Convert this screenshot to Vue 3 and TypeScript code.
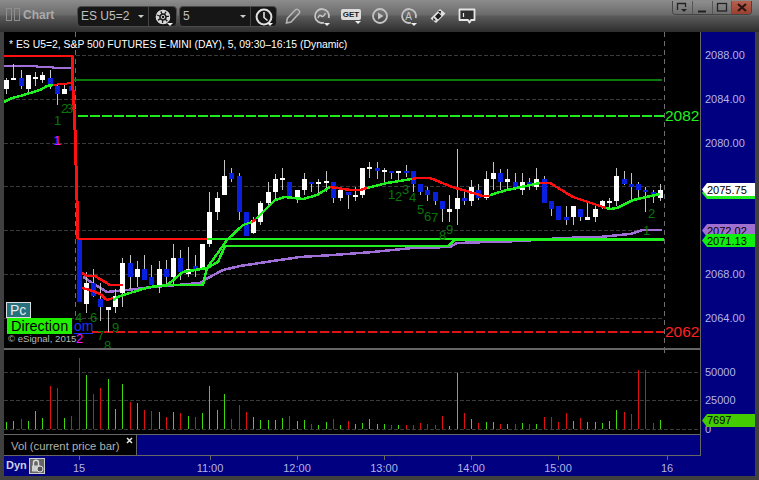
<script setup lang="ts">
type Candle = [number, number, number, number, 'w' | 'b']
const raw: Candle[] = [
  [78,94,80,89,'w'],[64,80,78,80,'w'],[70,89,78,86,'b'],[75,93,75,89,'w'],[72,86,77,79,'w'],[72,83,75,80,'w'],[70,89,78,86,'b'],[83,105,86,94,'b'],[83,94,89,94,'w'],[72,91,86,91,'b'],
  [239,302,239,302,'b'],[272,313,283,304,'w'],[269,297,283,296,'b'],[283,321,299,307,'b'],[307,332,307,310,'w'],[289,313,296,307,'w'],[258,307,263,293,'w'],[255,289,263,277,'b'],[261,287,269,277,'w'],[255,280,269,280,'b'],
  [265,285,277,285,'b'],[261,293,269,285,'w'],[260,287,269,277,'b'],[244,284,258,277,'w'],[250,280,258,272,'b'],[247,277,269,274,'w'],[255,277,266,269,'b'],[244,270,244,269,'w'],[192,247,212,244,'w'],[192,220,198,212,'w'],
  [160,195,176,195,'w'],[168,182,173,179,'b'],[173,220,176,212,'b'],[212,236,212,236,'b'],[217,234,220,233,'w'],[201,225,203,222,'w'],[182,206,192,203,'w'],[174,200,179,192,'w'],[168,190,178,180,'w'],[182,198,182,198,'b'],
  [190,203,190,198,'w'],[173,195,179,190,'w'],[182,192,182,184,'b'],[179,193,182,184,'w'],[171,192,181,183,'w'],[182,203,182,198,'b'],[187,201,190,198,'w'],[192,209,192,195,'b'],[187,201,195,197,'w'],[168,198,168,195,'w'],
  [162,178,167,169,'w'],[162,179,168,171,'b'],[168,182,170,172,'w'],[171,179,171,173,'b'],[171,182,171,173,'w'],[165,177,171,173,'b'],[171,192,171,184,'b'],[184,195,184,192,'b'],[187,201,190,195,'b'],[192,205,192,201,'b'],
  [201,222,201,209,'b'],[195,222,209,212,'w'],[149,225,198,209,'w'],[190,205,198,201,'b'],[180,206,187,201,'w'],[184,200,190,198,'b'],[171,200,179,198,'w'],[162,190,173,179,'w'],[169,190,173,182,'b'],[169,190,179,182,'w'],
  [173,190,182,187,'b'],[173,195,182,190,'w'],[178,190,182,184,'b'],[168,190,179,187,'w'],[176,203,179,203,'b'],[201,216,201,209,'b'],[206,220,206,220,'b'],[206,225,217,220,'b'],[206,225,206,217,'w'],[209,221,209,217,'b'],
  [202,220,217,220,'w'],[204,222,209,217,'w'],[200,209,201,206,'w'],[198,209,201,203,'w'],[168,206,176,201,'w'],[171,185,179,184,'b'],[173,200,184,187,'b'],[182,200,184,190,'b'],[187,212,190,192,'b'],[190,203,192,195,'b'],
  [184,201,190,198,'w'],
]
const xAt = (i: number) => Math.floor(6.5 + 7.267 * i)
const candles = raw.map((c, i) => ({ x: xAt(i), wt: c[0], wb: c[1], bt: c[2], bh: Math.max(c[3] - c[2], 2), fill: c[4] === 'w' ? '#ffffff' : '#0a20e0' }))

const volTops = '246g 243g 237r 243g 213g 234g 138r 144r 234g 228r 54r 105g 162r 144r 117g 207g 132g 186r 189g 210r 213r 216g 231r 216g 219r 228g 231r 219g 138g 210g 162g 237r 195r 216r 231g 240g 240g 240g 234g 228r 243g 240g 252r 255g 246g 237r 255g 243r 252g 249g 237g 252g 252g 255r 255g 255r 255r 249r 252r 255r 228r 258g 99g 219r 237g 249r 246g 246g 252r 252g 252r 249g 252r 252g 231r 231r 246r 219r 243g 234r 246g 246g 249g 243g 210g 216r 222r 90r 90r 249r 240g'.split(' ')
const vols = volTops.map((s, i) => ({
  x: xAt(i) + 0.5,
  y: 340 + parseInt(s) / 3,
  c: s.endsWith('g') ? '#3fd80a' : '#e01010',
}))

const gridPrice = [55, 99, 143, 186, 230, 274, 318]
const gridVol = [372, 400, 429]

const pts = (a: number[][]) => a.map(p => p.join(',')).join(' ')
const greenA = pts([[4,102],[12,98],[20,96],[30,93],[40,90],[47,86],[53,85]])
const redA = pts([[53,85],[62,84],[72,83]])
const purpleA = pts([[4,66],[37,66],[37,67],[53,67],[53,68],[72,68]])
const redTop = pts([[4,56],[73,56]])
const redDrop = pts([[72,56],[73,90],[75,130],[77,200],[78,239]])
const redBase = pts([[78,239],[207,239]])
const red1 = pts([[82,273],[87,276],[95,276],[110,285],[123,285]])
const red2 = pts([[82,288],[90,290],[100,294],[107,300],[113,298]])
const green1 = pts([[113,300],[118,297],[133,292],[150,287],[170,285],[203,285],[207,268],[218,262],[225,246]])
const greenMain = [
  { c: '#20f020', p: pts([[167,285],[183,272],[207,268],[227,240],[243,225],[252,222]]) },
  { c: '#ff1010', p: pts([[252,222],[256,219]]) },
  { c: '#20f020', p: pts([[256,219],[263,212],[275,200],[285,197],[303,199],[317,195],[330,187]]) },
  { c: '#ff1010', p: pts([[330,187],[337,188],[350,190],[360,190],[367,188]]) },
  { c: '#20f020', p: pts([[367,188],[387,183],[412,179]]) },
  { c: '#ff1010', p: pts([[412,179],[417,178],[430,178],[440,182],[452,187],[463,190],[483,196],[490,196]]) },
  { c: '#20f020', p: pts([[490,195],[507,190],[540,183]]) },
  { c: '#ff1010', p: pts([[540,183],[550,183],[573,197],[600,206],[606,208]]) },
  { c: '#20f020', p: pts([[606,208],[610,209],[617,208],[633,200],[660,194]]) },
]
const purpleB = pts([[83,277],[92,283],[107,292],[127,290],[153,287],[177,285],[200,283],[208,278],[223,270],[240,266],[273,261],[300,257],[333,255],[373,252],[413,248],[450,247],[457,243],[520,241],[563,238],[600,237],[630,234],[643,230],[662,230]])

const labels = [
  { t: '2', x: 61, y: 113 }, { t: '3', x: 66, y: 113 }, { t: '1', x: 54, y: 125 },
  { t: '4', x: 75, y: 322 }, { t: '6', x: 90, y: 322 }, { t: '9', x: 112, y: 332 }, { t: '7', x: 97, y: 340 }, { t: '8', x: 104, y: 350 },
  { t: '1', x: 388, y: 199 }, { t: '2', x: 395, y: 201 }, { t: '3', x: 402, y: 194 }, { t: '4', x: 409, y: 202 },
  { t: '5', x: 417, y: 214 }, { t: '6', x: 424, y: 221 }, { t: '7', x: 431, y: 222 }, { t: '8', x: 439, y: 240 }, { t: '9', x: 446, y: 234 },
  { t: '1', x: 643, y: 235 }, { t: '2', x: 648, y: 218 },
]
const priceAxis = [
  { t: '2088.00', y: 59 }, { t: '2084.00', y: 103 }, { t: '2080.00', y: 147 }, { t: '2068.00', y: 278 }, { t: '2064.00', y: 322 },
]
const volAxis = [{ t: '50000', y: 376 }, { t: '25000', y: 404 }, { t: '0', y: 433 }]
const times = [
  { t: '15', x: 79 }, { t: '11:00', x: 210 }, { t: '12:00', x: 297 }, { t: '13:00', x: 384 }, { t: '14:00', x: 471 }, { t: '15:00', x: 558 }, { t: '16', x: 667 },
]
</script>

<template>
  <div class="window">
    <header class="titlebar">
      <div class="grip"><span></span><span></span></div>
      <span class="title">Chart</span>
      <div class="combo first">
        <span class="field">ES U5=2<i class="caret"></i></span>
        <span class="iconcell">
          <svg width="20" height="20" viewBox="0 0 20 20"><circle cx="10" cy="10" r="5.5" fill="none" stroke="#d8d8d8" stroke-width="3.4" stroke-dasharray="3.4 1.4"/><circle cx="10" cy="10" r="6.6" fill="none" stroke="#d8d8d8" stroke-width="1.2"/><circle cx="10" cy="10" r="1.8" fill="none" stroke="#d8d8d8" stroke-width="1"/></svg>
          <i class="mini"></i>
        </span>
      </div>
      <div class="combo second">
        <span class="field">5<i class="caret"></i></span>
        <span class="iconcell">
          <svg width="20" height="20" viewBox="0 0 20 20"><circle cx="10" cy="10" r="7.4" fill="none" stroke="#e0e0e0" stroke-width="2"/><path d="M10 5v5.500l3.500 3" fill="none" stroke="#e0e0e0" stroke-width="1.600"/></svg>
          <i class="mini"></i>
        </span>
      </div>
      <div class="tools">
        <svg width="18" height="18" viewBox="0 0 18 18"><path d="M2.500 16l.8-4.500L11.500 2.800a1.800 1.800 0 0 1 2.600 0l1 1a1.800 1.800 0 0 1 0 2.600L7 15z" fill="none" stroke="#b4b4b4" stroke-width="1.600"/></svg>
        <span class="tool">
          <svg width="18" height="18" viewBox="0 0 18 18"><path d="M11 15.700A7 7 0 1 1 15.700 11" fill="none" stroke="#c4c4c4" stroke-width="1.800"/><path d="M5 11c1-3 2-3 3.500-2s2.500 0 4-3" fill="none" stroke="#c4c4c4" stroke-width="1.600"/></svg><i class="mini"></i>
        </span>
        <span class="tool get"><b>GET</b><i class="mini"></i></span>
        <svg width="18" height="18" viewBox="0 0 18 18"><circle cx="9" cy="9" r="7" fill="none" stroke="#c4c4c4" stroke-width="1.800"/><path d="M7 5.500v7l5.500-3.500z" fill="#c4c4c4"/></svg>
        <span class="tool">
          <svg width="18" height="18" viewBox="0 0 18 18"><path d="M11 15.700A7 7 0 1 1 15.700 11" fill="none" stroke="#c4c4c4" stroke-width="1.800"/><text x="8.500" y="12.500" class="atxt">A</text></svg><i class="mini"></i>
        </span>
        <svg width="18" height="18" viewBox="0 0 18 18"><path d="M1.500 11.500L11 2l5.500 4.500L7 16z" fill="#e0e0e0"/><path d="M6 9.500l3 3 3.500-3.500-3-3z" fill="#1c1c1c"/><path d="M9 4l3 0-.5 3zM4 13.500l.5-3 2.500 3z" fill="#1c1c1c"/></svg>
        <svg width="18" height="18" viewBox="0 0 18 18"><path d="M1.500 2.500h15v10.500h-3.500l-1.500 2.500-1.500-2.500h-8.500z" fill="#2e2e2e" stroke="#e6e6e6" stroke-width="1.800" stroke-linejoin="round"/><path d="M5.500 6v4" stroke="#e6e6e6" stroke-width="1.200"/></svg>
      </div>
      <div class="winbtns">
        <span class="wbtn"><svg width="12" height="11" viewBox="0 0 12 11"><path d="M1.500 8V1.500h8V5" fill="none" stroke="#222" stroke-width="1.300"/><path d="M5 7h6l-3 3z" fill="#222"/></svg></span>
        <span class="wbtn"><svg width="12" height="11" viewBox="0 0 12 11"><path d="M2 9.500h8" stroke="#222" stroke-width="2"/></svg></span>
        <span class="wbtn"><svg width="12" height="11" viewBox="0 0 12 11"><rect x="1.500" y="1.500" width="9" height="7.500" fill="none" stroke="#222" stroke-width="1.300"/></svg></span>
        <span class="wbtn close"><svg width="12" height="11" viewBox="0 0 12 11"><path d="M2 2l8 7M10 2l-8 7" stroke="#2a1510" stroke-width="2.200"/></svg></span>
      </div>
    </header>

    <main class="body">
      <div class="upper">
        <div class="panes">
          <section class="price-pane">
            <svg class="plot" width="696" height="316" viewBox="4 32 696 316">
              <g shape-rendering="crispEdges">
                <line v-for="y in gridPrice" :key="y" x1="4" x2="664" :y1="y + 0.5" :y2="y + 0.5" class="grid"/>
                <line x1="75.5" x2="75.5" y1="32" y2="316" class="grid vert"/>
                <line x1="664.5" x2="664.5" y1="32" y2="348" class="grid vert"/>
                <line x1="74" x2="662" y1="80" y2="80" stroke="#0a7a0a" stroke-width="2"/>
                <line x1="78" x2="664" y1="116" y2="116" stroke="#20e820" stroke-width="2" stroke-dasharray="10 2"/>
                <line x1="92" x2="664" y1="332" y2="332" stroke="#e01414" stroke-width="2" stroke-dasharray="9 3"/>
              </g>
              <g shape-rendering="crispEdges">
                <polyline :points="purpleA" class="ln purple"/>
                <polyline :points="purpleB" class="ln purple thick"/>
                <template v-for="c in candles" :key="c.x">
                  <line :x1="c.x + 0.5" :x2="c.x + 0.5" :y1="c.wt" :y2="c.wb" stroke="#c4c4c4"/>
                  <rect :x="c.x - 2" :y="c.bt" width="5" :height="c.bh" :fill="c.fill"/>
                </template>
                <polyline :points="greenA" class="ln thick" stroke="#20f020"/>
                <polyline :points="redA" class="ln" stroke="#ff1010"/>
                <polyline :points="redTop" class="ln" stroke="#ff1010"/>
                <polyline :points="redDrop" class="ln heavy" stroke="#ff1010"/>
                <polyline :points="redBase" class="ln" stroke="#ff1010"/>
                <polyline :points="red1" class="ln thick" stroke="#ff1010"/>
                <polyline :points="red2" class="ln thick" stroke="#ff1010"/>
                <polyline :points="green1" class="ln thick" stroke="#20f020"/>
                <polyline v-for="(g, i) in greenMain" :key="i" :points="g.p" class="ln thick" :stroke="g.c"/>
                <polyline points="207,239 664,239" class="ln" stroke="#20f020"/>
                <polyline points="225,246 448,246" class="ln" stroke="#20f020"/>
                <polyline points="448,246 455,240 462,239" class="ln thick" stroke="#20f020"/>
                <polyline points="455,240 664,240" class="ln" stroke="#20f020"/>
              </g>
              <text x="9" y="48" class="legend">* ES U5=2, S&amp;P 500 FUTURES E-MINI (DAY), 5, 09:30–16:15 (Dynamic)</text>
              <text v-for="(l, i) in labels" :key="i" :x="l.x" :y="l.y" class="count">{{ l.t }}</text>
              <text x="53" y="145" class="mag shadow">1</text>
              <text x="54" y="145" class="mag">1</text>
              <text x="76" y="343" class="mag">2</text>
              <text x="665" y="121" class="level lg">2082</text>
              <text x="665" y="337" class="level lr">2062</text>
            </svg>
            <span class="tag-pc">Pc</span>
            <span class="tag-dir">Direction</span>
            <span class="tag-om">om</span>
            <span class="credit">© eSignal, 2015</span>
          </section>
          <section class="vol-pane">
            <svg class="plot" width="696" height="84" viewBox="4 350 696 84">
              <g shape-rendering="crispEdges">
                <line v-for="y in gridVol" :key="y" x1="4" x2="700" :y1="y + 0.5" :y2="y + 0.5" class="grid"/>
                <line x1="664.5" x2="664.5" y1="350" y2="353" class="grid vert"/>
                <line v-for="(v, i) in vols" :key="i" :x1="v.x" :x2="v.x" :y1="v.y" y2="429" :stroke="v.c"/>
              </g>
            </svg>
          </section>
          <section class="vol-title">
            <div class="vol-name">
              <span>Vol (current price bar)</span>
              <svg class="x" width="7" height="7" viewBox="0 0 7 7"><path d="M1 1l5 5M6 1l-5 5" stroke="#e8e8e8" stroke-width="1.500"/></svg>
            </div>
            <div class="vol-fill"></div>
          </section>
        </div>
        <aside class="axis">
          <svg width="54" height="424" viewBox="701 32 54 424">
            <text v-for="p in priceAxis" :key="p.t" x="705" :y="p.y" class="ax">{{ p.t }}</text>
            <text v-for="p in volAxis" :key="p.t" x="705" :y="p.y" class="ax">{{ p.t }}</text>
            <path d="M707 186h48v13h-48l-5-6z" fill="#20f020"/>
            <path d="M707 183h48v13h-48l-5-6.500z" fill="#ffffff"/>
            <text x="707" y="194" class="tagt">2075.75</text>
            <path d="M707 224h48v13h-48l-5-6.500z" fill="#a070d0"/>
            <text x="707" y="235" class="tagt">2072.02</text>
            <path d="M707 234h48v13h-48l-5-6.500z" fill="#10f010"/>
            <text x="707" y="245" class="tagt">2071.13</text>
            <path d="M707 414h48v13h-48l-5-6.500z" fill="#44cc00"/>
            <text x="707" y="424" class="tagt">7697</text>
          </svg>
        </aside>
      </div>
      <footer class="timebar">
        <span class="dyn">Dyn</span>
        <span class="lock">
          <svg width="14" height="14" viewBox="0 0 14 14"><path d="M3.500 7V3.800a2.500 2.500 0 0 1 5 0V7" fill="none" stroke="#ddd" stroke-width="1.400"/><rect x="2" y="6.500" width="8" height="6" fill="#cfcfcf"/><circle cx="10" cy="10" r="3" fill="#555" stroke="#ddd"/></svg>
        </span>
        <svg class="times" width="751" height="20" viewBox="4 456 751 20">
          <g shape-rendering="crispEdges">
            <line v-for="t in times" :key="t.x" :x1="t.x + 0.5" :x2="t.x + 0.5" y1="456" y2="460" stroke="#666"/>
          </g>
          <text v-for="t in times" :key="t.x" :x="t.x" y="472" class="ax mid">{{ t.t }}</text>
        </svg>
      </footer>
    </main>
  </div>
</template>

<style>
html, body { margin: 0; background: #333; }
</style>

<style scoped>
.window { width: 759px; height: 480px; display: flex; flex-direction: column; overflow: hidden; background: #404040; font-family: "Liberation Sans", Arial, sans-serif; }
.titlebar { position: relative; height: 32px; flex: none; display: flex; align-items: flex-start; padding-left: 6px; box-sizing: border-box; background: linear-gradient(#8c8c8c 0, #6a6a6a 15px, #5a5a5a 16px, #2e2e2e 32px); }
.grip { display: flex; gap: 2px; margin-top: 8px; }
.grip span { width: 4px; height: 11px; border: 1px solid #8e8e8e; }
.title { margin: 8px 0 0 3px; width: 54px; font-size: 12px; font-weight: bold; color: #aaa; line-height: 15px; }
.combo { display: flex; height: 21px; margin-top: 6px; background: #161616; border: 1px solid #4a4a4a; border-radius: 4px; box-sizing: border-box; color: #c0c0c0; font-size: 12px; }
.combo.first { width: 100px; }
.combo.second { width: 98px; margin-left: 2px; }
.field { flex: 1; display: flex; align-items: center; padding-left: 3px; position: relative; line-height: 19px; }
.caret { position: absolute; right: 4px; top: 8px; border: 3px solid transparent; border-top: 3px solid #ccc; }
.iconcell { position: relative; width: 27px; border-left: 1px solid #444; display: flex; align-items: center; justify-content: center; }
.second .iconcell { width: 25px; }
.mini { position: absolute; right: 3px; bottom: 0; border: 3px solid transparent; border-top: 3px solid #eee; border-bottom: 0; }
.tools { display: flex; align-items: center; height: 20px; margin: 6px 0 0 7px; gap: 11px; }
.tool { position: relative; display: flex; width: 18px; height: 18px; }
.tool .mini { right: 1px; bottom: -1px; }
.tool.get { align-items: center; justify-content: center; }
.tool.get b { font-size: 8px; background: #dcdcdc; color: #222; padding: 1px 2px; border-radius: 2px; line-height: 9px; margin-top: -3px; }
.tool.get .mini { right: -1px; bottom: 1px; }
.atxt { font-size: 10px; text-anchor: middle; fill: #c8c8c8; font-family: "Liberation Sans", Arial, sans-serif; }
.winbtns { position: absolute; left: 672px; top: 1px; display: flex; height: 14px; width: 80px; border: 1px solid #444; border-top: 0; border-radius: 0 0 4px 4px; overflow: hidden; box-sizing: border-box; }
.wbtn { flex: 1; display: flex; align-items: center; justify-content: center; background: linear-gradient(#8e8e8e, #6e6e6e); border-left: 1px solid #555; }
.wbtn:first-child { border-left: 0; }
.wbtn.close { background: linear-gradient(#b86050, #9a4030); }
.body { flex: 1; display: flex; flex-direction: column; padding: 0 4px 4px; min-height: 0; }
.upper { display: flex; height: 424px; flex: none; background: #000080; }
.panes { width: 696px; flex: none; display: flex; flex-direction: column; border-right: 1px solid #666; box-sizing: content-box; }
.price-pane { position: relative; height: 316px; background: #000; flex: none; overflow: hidden; }
.vol-pane { height: 84px; margin-top: 2px; background: #000; border-bottom: 1px solid #666; flex: none; box-shadow: 0 -2px 0 #666; }
.plot { display: block; }
.vol-title { flex: 1; display: flex; border-bottom: 1px solid #666; }
.vol-name { position: relative; width: 132px; background: #000; color: #b0b0b0; font-size: 11.3px; padding: 5px 0 0 7px; box-sizing: border-box; }
.vol-name .x { position: absolute; right: 3px; top: 2px; }
.vol-fill { flex: 1; background: #000080; border-left: 1px solid #666; border-top: 0; }
.axis { flex: 1; }
.axis svg { display: block; }
.timebar { position: relative; height: 20px; flex: none; background: #000080; display: flex; }
.dyn { position: absolute; left: 2px; top: 3px; font-weight: bold; font-size: 11px; color: #cdd0e8; z-index: 1; }
.lock { position: absolute; left: 25px; top: 2px; width: 16px; height: 16px; box-sizing: border-box; border: 1px solid #ccc; background: #666; z-index: 1; }
.times { display: block; }
.grid { stroke: #3a3a3a; stroke-dasharray: 4 2; }
.grid.vert { stroke: #707070; stroke-dasharray: 5 4; }
.ln { fill: none; stroke-width: 2; }
.ln.thick { stroke-width: 2.5; }
.ln.heavy { stroke-width: 3; }
.purple { stroke: #a070d8; }
.legend { fill: #fff; font-size: 10.4px; font-family: "Liberation Sans", Arial, sans-serif; }
.count { fill: #0a760a; font-size: 13px; font-family: "Liberation Sans", Arial, sans-serif; }
.mag { fill: #ff10ff; font-size: 13px; font-family: "Liberation Sans", Arial, sans-serif; }
.mag.shadow { fill: #2020ff; }
.level { font-size: 15.5px; font-family: "Liberation Sans", Arial, sans-serif; }
.lg { fill: #20f020; }
.lr { fill: #ff2020; }
.tag-pc { position: absolute; left: 2px; top: 270px; width: 25px; height: 16px; box-sizing: border-box; border: 1px solid #ddd; background: #27707e; color: #e8e8e8; font-size: 14px; line-height: 15px; padding-left: 3px; }
.tag-dir { position: absolute; left: 3px; top: 286px; height: 16px; width: 65px; background: #20f000; color: #000; font-size: 14.5px; line-height: 16px; padding-left: 4px; box-sizing: border-box; }
.tag-om { position: absolute; left: 70px; top: 286px; height: 15px; color: #1a30ff; font-size: 14px; line-height: 16px; border-bottom: 1px solid #1a30ff; }
.credit { position: absolute; left: 4px; top: 301px; color: #b8b8b8; font-size: 9.6px; line-height: 12px; }
.ax { fill: #b4b4e6; font-size: 11px; font-family: "Liberation Sans", Arial, sans-serif; }
.mid { text-anchor: middle; }
.tagt { fill: #000; font-size: 11px; font-family: "Liberation Sans", Arial, sans-serif; }
</style>
